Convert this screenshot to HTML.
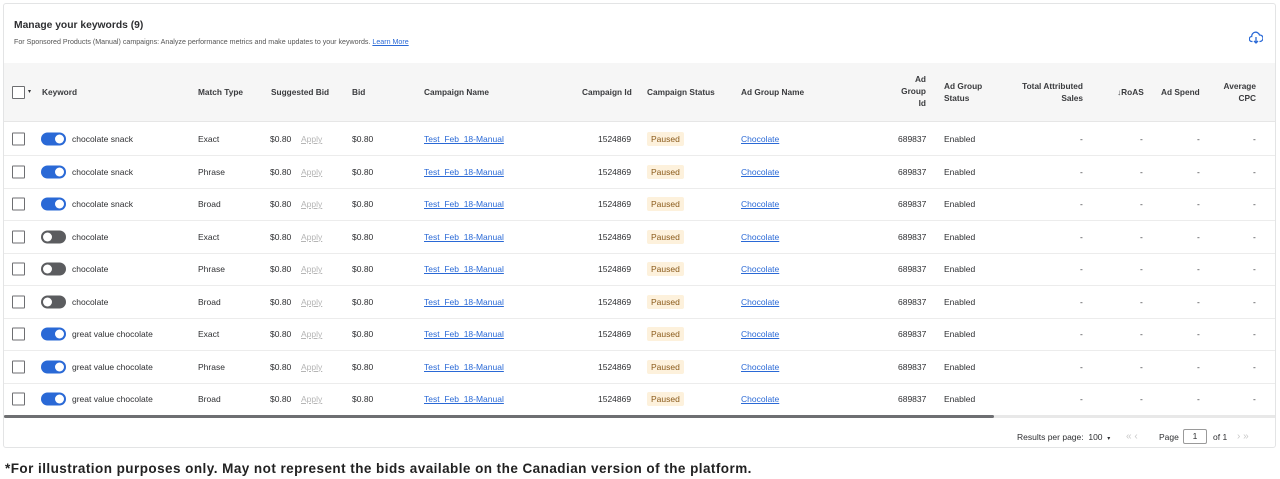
<!DOCTYPE html>
<html><head><meta charset="utf-8"><style>
*{margin:0;padding:0;box-sizing:border-box}
body{width:1280px;height:479px;background:#fff;font-family:"Liberation Sans",sans-serif;color:#2e2f32;position:relative;overflow:hidden;font-size:8.5px}
.card{position:absolute;left:3px;top:3px;width:1273px;height:445px;border:1px solid #e3e4e5;border-radius:3px}
.t{position:absolute;white-space:nowrap}
.hdr{position:absolute;left:4px;top:63px;width:1271px;height:59px;background:#f6f6f6;border-bottom:1px solid #e6e6e6}
.h{position:absolute;font-weight:bold;font-size:8.3px;color:#3a3b3e;line-height:12px}
.row{position:absolute;left:4px;width:1271px;height:33px;border-bottom:1px solid #ececec}
.row span{position:absolute;top:50%;transform:translateY(-50%);white-space:nowrap}
.cb{width:13px;height:13px;border:1.3px solid #6d6e71;border-radius:1px;background:#fff}
.tg{width:25px;height:13px;border-radius:7px;background:#2a69d6}
.tg::after{content:"";position:absolute;right:2px;top:2px;width:9px;height:9px;border-radius:50%;background:#fff}
.tg.off{background:#5b5c5f}
.tg.off::after{left:2px;right:auto}
.ln{color:#2a69d6;text-decoration:underline}
.ap{color:#b5b5b5;text-decoration:underline}
.pz{background:#fdf1dc;color:#8a5a1a;padding:2px 4px;border-radius:2px}
.r{text-align:right}
</style></head><body>
<div class="card"></div>
<div class="t" style="left:14px;top:20px;font-weight:bold;font-size:10.3px">Manage your keywords (9)</div>
<div class="t" style="left:14px;top:38px;font-size:7.1px;color:#555">For Sponsored Products (Manual) campaigns: Analyze performance metrics and make updates to your keywords. <span class="ln">Learn More</span></div>
<svg style="position:absolute;left:1249px;top:31px" width="14" height="14" viewBox="0 0 14 14"><path d="M3.5 10.5H3a2.5 2.5 0 0 1-.3-5A4 4 0 0 1 10.5 4a3 3 0 0 1 .5 6.5h-.5" fill="none" stroke="#2a69d6" stroke-width="1.3"/><path d="M7 6v6M5 10l2 2 2-2" fill="none" stroke="#2a69d6" stroke-width="1.3"/></svg>
<div class="hdr"></div>
<div class="cb" style="position:absolute;left:12px;top:86px"></div>
<div class="t" style="left:28px;top:88px;font-size:6px">▾</div>
<div class="h" style="left:42px;top:86px">Keyword</div>
<div class="h" style="left:198px;top:86px">Match Type</div>
<div class="h" style="left:271px;top:86px">Suggested Bid</div>
<div class="h" style="left:352px;top:86px">Bid</div>
<div class="h" style="left:424px;top:86px">Campaign Name</div>
<div class="h" style="left:582px;top:86px">Campaign Id</div>
<div class="h" style="left:647px;top:86px">Campaign Status</div>
<div class="h" style="left:741px;top:86px">Ad Group Name</div>
<div class="h r" style="left:880px;width:46px;top:73px">Ad<br>Group<br>Id</div>
<div class="h" style="left:944px;top:80px">Ad Group<br>Status</div>
<div class="h r" style="left:1000px;width:83px;top:80px">Total Attributed<br>Sales</div>
<div class="h" style="left:1117px;top:86px">↓RoAS</div>
<div class="h" style="left:1161px;top:86px">Ad Spend</div>
<div class="h r" style="left:1210px;width:46px;top:80px">Average<br>CPC</div>

<div class="row" style="top:123px"><span class="cb" style="left:8px"></span><span class="tg" style="left:37px"></span><span style="left:68px">chocolate snack</span><span style="left:194px">Exact</span><span style="left:266px">$0.80</span><span class="ap" style="left:297px">Apply</span><span style="left:348px">$0.80</span><span class="ln" style="left:420px">Test_Feb_18-Manual</span><span style="left:594px">1524869</span><span class="pz" style="left:643px">Paused</span><span class="ln" style="left:737px">Chocolate</span><span style="left:894px">689837</span><span style="left:940px">Enabled</span><span style="left:1076px">-</span><span style="left:1136px">-</span><span style="left:1193px">-</span><span style="left:1249px">-</span></div>
<div class="row" style="top:155.5px"><span class="cb" style="left:8px"></span><span class="tg" style="left:37px"></span><span style="left:68px">chocolate snack</span><span style="left:194px">Phrase</span><span style="left:266px">$0.80</span><span class="ap" style="left:297px">Apply</span><span style="left:348px">$0.80</span><span class="ln" style="left:420px">Test_Feb_18-Manual</span><span style="left:594px">1524869</span><span class="pz" style="left:643px">Paused</span><span class="ln" style="left:737px">Chocolate</span><span style="left:894px">689837</span><span style="left:940px">Enabled</span><span style="left:1076px">-</span><span style="left:1136px">-</span><span style="left:1193px">-</span><span style="left:1249px">-</span></div>
<div class="row" style="top:188px"><span class="cb" style="left:8px"></span><span class="tg" style="left:37px"></span><span style="left:68px">chocolate snack</span><span style="left:194px">Broad</span><span style="left:266px">$0.80</span><span class="ap" style="left:297px">Apply</span><span style="left:348px">$0.80</span><span class="ln" style="left:420px">Test_Feb_18-Manual</span><span style="left:594px">1524869</span><span class="pz" style="left:643px">Paused</span><span class="ln" style="left:737px">Chocolate</span><span style="left:894px">689837</span><span style="left:940px">Enabled</span><span style="left:1076px">-</span><span style="left:1136px">-</span><span style="left:1193px">-</span><span style="left:1249px">-</span></div>
<div class="row" style="top:220.5px"><span class="cb" style="left:8px"></span><span class="tg off" style="left:37px"></span><span style="left:68px">chocolate</span><span style="left:194px">Exact</span><span style="left:266px">$0.80</span><span class="ap" style="left:297px">Apply</span><span style="left:348px">$0.80</span><span class="ln" style="left:420px">Test_Feb_18-Manual</span><span style="left:594px">1524869</span><span class="pz" style="left:643px">Paused</span><span class="ln" style="left:737px">Chocolate</span><span style="left:894px">689837</span><span style="left:940px">Enabled</span><span style="left:1076px">-</span><span style="left:1136px">-</span><span style="left:1193px">-</span><span style="left:1249px">-</span></div>
<div class="row" style="top:253px"><span class="cb" style="left:8px"></span><span class="tg off" style="left:37px"></span><span style="left:68px">chocolate</span><span style="left:194px">Phrase</span><span style="left:266px">$0.80</span><span class="ap" style="left:297px">Apply</span><span style="left:348px">$0.80</span><span class="ln" style="left:420px">Test_Feb_18-Manual</span><span style="left:594px">1524869</span><span class="pz" style="left:643px">Paused</span><span class="ln" style="left:737px">Chocolate</span><span style="left:894px">689837</span><span style="left:940px">Enabled</span><span style="left:1076px">-</span><span style="left:1136px">-</span><span style="left:1193px">-</span><span style="left:1249px">-</span></div>
<div class="row" style="top:285.5px"><span class="cb" style="left:8px"></span><span class="tg off" style="left:37px"></span><span style="left:68px">chocolate</span><span style="left:194px">Broad</span><span style="left:266px">$0.80</span><span class="ap" style="left:297px">Apply</span><span style="left:348px">$0.80</span><span class="ln" style="left:420px">Test_Feb_18-Manual</span><span style="left:594px">1524869</span><span class="pz" style="left:643px">Paused</span><span class="ln" style="left:737px">Chocolate</span><span style="left:894px">689837</span><span style="left:940px">Enabled</span><span style="left:1076px">-</span><span style="left:1136px">-</span><span style="left:1193px">-</span><span style="left:1249px">-</span></div>
<div class="row" style="top:318px"><span class="cb" style="left:8px"></span><span class="tg" style="left:37px"></span><span style="left:68px">great value chocolate</span><span style="left:194px">Exact</span><span style="left:266px">$0.80</span><span class="ap" style="left:297px">Apply</span><span style="left:348px">$0.80</span><span class="ln" style="left:420px">Test_Feb_18-Manual</span><span style="left:594px">1524869</span><span class="pz" style="left:643px">Paused</span><span class="ln" style="left:737px">Chocolate</span><span style="left:894px">689837</span><span style="left:940px">Enabled</span><span style="left:1076px">-</span><span style="left:1136px">-</span><span style="left:1193px">-</span><span style="left:1249px">-</span></div>
<div class="row" style="top:350.5px"><span class="cb" style="left:8px"></span><span class="tg" style="left:37px"></span><span style="left:68px">great value chocolate</span><span style="left:194px">Phrase</span><span style="left:266px">$0.80</span><span class="ap" style="left:297px">Apply</span><span style="left:348px">$0.80</span><span class="ln" style="left:420px">Test_Feb_18-Manual</span><span style="left:594px">1524869</span><span class="pz" style="left:643px">Paused</span><span class="ln" style="left:737px">Chocolate</span><span style="left:894px">689837</span><span style="left:940px">Enabled</span><span style="left:1076px">-</span><span style="left:1136px">-</span><span style="left:1193px">-</span><span style="left:1249px">-</span></div>
<div class="row" style="top:383px"><span class="cb" style="left:8px"></span><span class="tg" style="left:37px"></span><span style="left:68px">great value chocolate</span><span style="left:194px">Broad</span><span style="left:266px">$0.80</span><span class="ap" style="left:297px">Apply</span><span style="left:348px">$0.80</span><span class="ln" style="left:420px">Test_Feb_18-Manual</span><span style="left:594px">1524869</span><span class="pz" style="left:643px">Paused</span><span class="ln" style="left:737px">Chocolate</span><span style="left:894px">689837</span><span style="left:940px">Enabled</span><span style="left:1076px">-</span><span style="left:1136px">-</span><span style="left:1193px">-</span><span style="left:1249px">-</span></div>

<div style="position:absolute;left:4px;top:415px;width:1271px;height:3px;background:#e8e8e8"></div>
<div style="position:absolute;left:4px;top:415px;width:990px;height:3px;background:#6e6f72;border-radius:2px"></div>

<div class="t" style="left:1017px;top:432px;font-size:8.5px">Results per page:&nbsp; 100 &nbsp;<span style="font-size:6px">▾</span></div>
<div class="t" style="left:1126px;top:431px;font-size:10px;color:#c8c8c8">« ‹</div>
<div class="t" style="left:1159px;top:432px;font-size:8.5px">Page</div>
<div style="position:absolute;left:1183px;top:429px;width:24px;height:15px;border:1px solid #9a9a9a;border-radius:2px;font-size:8.5px;text-align:center;line-height:13px">1</div>
<div class="t" style="left:1213px;top:432px;font-size:8.5px">of 1</div>
<div class="t" style="left:1237px;top:431px;font-size:10px;color:#c8c8c8">› »</div>

<div class="t" style="left:5px;top:461px;font-size:13.5px;font-weight:bold;color:#222;letter-spacing:0.45px">*For illustration purposes only. May not represent the bids available on the Canadian version of the platform.</div>
</body></html>
